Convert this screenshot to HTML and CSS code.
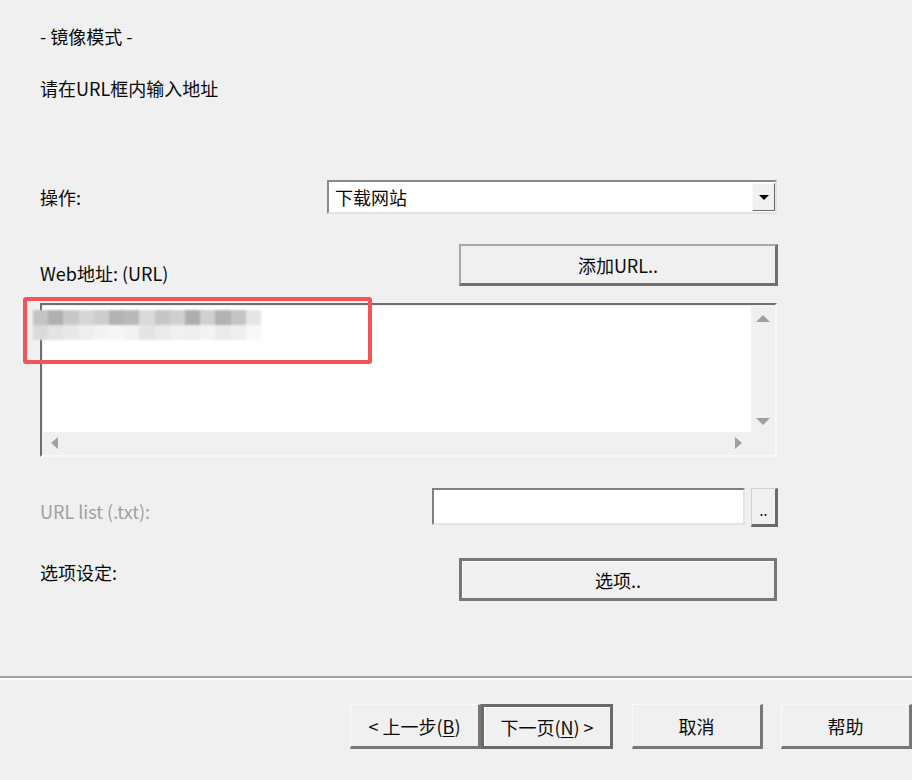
FILE: index.html
```html
<!DOCTYPE html>
<html lang="zh-CN">
<head>
<meta charset="utf-8">
<title>镜像模式</title>
<link rel="stylesheet" href="styles.css">
</head>
<body>
<div class="dialog">
  <div class="content">
    <p class="title">- 镜像模式 -</p>
    <p class="hint">请在URL框内输入地址</p>

    <div class="row row-op">
      <span class="label">操作:</span>
      <div class="combo">
        <span class="combo-text">下载网站</span>
        <span class="combo-btn"><span class="tri-down-black"></span></span>
      </div>
    </div>

    <div class="row row-urlhead">
      <span class="label label-low">Web地址: (URL)</span>
      <button class="btn btn-add">添加URL..</button>
    </div>

    <div class="urlbox">
      <div class="url-area"></div>
      <div class="vscroll">
        <span class="tri tri-up"></span>
        <span class="tri tri-down"></span>
      </div>
      <div class="hscroll">
        <span class="tri tri-left"></span>
        <span class="tri tri-right"></span>
      </div>
      <div class="corner"></div>

      <div class="mosaic">
        <div class="mrow mrow-top">
          <i style="background:#c4c4c4"></i><i style="background:#b0b0b0"></i><i style="background:#c8c8c8"></i><i style="background:#d6d6d6"></i><i style="background:#cdcdcd"></i><i style="background:#b3b3b3"></i><i style="background:#b9b9b9"></i><i style="background:#dadada"></i><i style="background:#c6c6c6"></i><i style="background:#cfcfcf"></i><i style="background:#adadad"></i><i style="background:#d0d0d0"></i><i style="background:#b2b2b2"></i><i style="background:#c4c4c4"></i><i style="background:#e6e6e6"></i>
        </div>
        <div class="mrow mrow-bot">
          <i style="background:#dadada"></i><i style="background:#e3e3e3"></i><i style="background:#e8e8e8"></i><i style="background:#eeeeee"></i><i style="background:#f3f3f3"></i><i style="background:#f6f6f6"></i><i style="background:#f2f2f2"></i><i style="background:#e4e4e4"></i><i style="background:#eaeaea"></i><i style="background:#f0f0f0"></i><i style="background:#efefef"></i><i style="background:#f3f3f3"></i><i style="background:#ebebeb"></i><i style="background:#efefef"></i><i style="background:#f8f8f8"></i>
        </div>
      </div>
      <div class="highlight"></div>
    </div>

    <div class="row row-list">
      <span class="label label-disabled">URL list (.txt):</span>
      <div class="list-ctrls">
        <div class="field"></div>
        <button class="btn btn-dots">..</button>
      </div>
    </div>

    <div class="row row-opts">
      <span class="label label-top">选项设定:</span>
      <button class="btn btn-opts">选项..</button>
    </div>
  </div>

  <div class="separator"></div>

  <div class="footer">
    <button class="btn fbtn btn-back">&lt; 上一步(<u>B</u>)</button>
    <button class="btn fbtn btn-next">下一页(<u>N</u>) &gt;</button>
    <button class="btn fbtn btn-cancel">取消</button>
    <button class="btn fbtn btn-help">帮助</button>
  </div>
</div>
</body>
</html>
```

FILE: styles.css
```css
html, body {
  margin: 0;
  padding: 0;
  background: #f0f0f0;
  overflow: hidden;
}

body {
  width: 912px;
  height: 780px;
  font-family: "Noto Sans CJK SC", "Noto Sans", sans-serif;
  font-size: 18px;
  color: #0a0a0a;
}

.dialog {
  width: 912px;
  height: 780px;
  overflow: hidden;
}

.content {
  width: 737px;
  padding: 25px 0 0 40px;
}

p {
  margin: 0;
  line-height: 22px;
}

.hint {
  margin-top: 30px;
}

.row {
  display: flex;
  justify-content: space-between;
}

.label {
  line-height: 22px;
  white-space: nowrap;
}

/* operation row */
.row-op {
  margin-top: 81px;
  height: 34px;
  align-items: center;
}

.combo {
  width: 446px;
  height: 30px;
  background: #fff;
  border: 2px solid;
  border-color: #8a8a8a #e3e3e3 #e3e3e3 #8a8a8a;
  display: flex;
  align-items: center;
  justify-content: space-between;
}

.combo-text {
  padding-left: 6px;
  line-height: 22px;
}

.combo-btn {
  width: 21px;
  height: 26px;
  background: #f0f0f0;
  border: 1px solid;
  border-color: #fafafa #6a6a6a #6a6a6a #fafafa;
  display: flex;
  align-items: center;
  justify-content: center;
}

.tri-down-black {
  width: 0;
  height: 0;
  border-left: 5px solid transparent;
  border-right: 5px solid transparent;
  border-top: 5px solid #000;
}

/* buttons */
.btn {
  font-family: inherit;
  font-size: 18px;
  color: #0a0a0a;
  background: #f0f0f0;
  border-style: solid;
  border-width: 2px 3px 3px 2px;
  border-color: #a8a8a8 #707070 #707070 #a8a8a8;
  padding: 0;
  margin: 0;
  box-sizing: border-box;
  line-height: 22px;
  cursor: default;
}

.row-urlhead {
  margin-top: 30px;
  height: 42px;
  align-items: flex-end;
}

.label-low {
  padding-bottom: 2px;
}

.btn-add {
  width: 319px;
  height: 42px;
  margin-right: -1px;
}

/* URL box */
.urlbox {
  position: relative;
  margin-top: 17px;
  width: 737px;
  height: 154px;
  box-sizing: border-box;
  border-style: solid;
  border-width: 2px;
  border-color: #6e6e6e #f8f8f8 #f8f8f8 #6e6e6e;
  display: grid;
  grid-template-columns: 1fr 24px;
  grid-template-rows: 1fr 23px;
  background: #f0f0f0;
}

.url-area {
  background: #fff;
  margin-top: 1px;
  margin-left: 1px;
}

.vscroll,
.hscroll {
  background: #f0f0f0;
  position: relative;
}

.corner {
  background: #f0f0f0;
}

.tri {
  position: absolute;
  width: 0;
  height: 0;
}

.tri-up {
  left: 5px;
  top: 10px;
  border-left: 7px solid transparent;
  border-right: 7px solid transparent;
  border-bottom: 7px solid #a0a0a0;
}

.tri-down {
  left: 5px;
  bottom: 7px;
  border-left: 7px solid transparent;
  border-right: 7px solid transparent;
  border-top: 7px solid #a0a0a0;
}

.tri-left {
  left: 9px;
  top: 5px;
  border-top: 6px solid transparent;
  border-bottom: 6px solid transparent;
  border-right: 7px solid #a0a0a0;
}

.tri-right {
  right: 9px;
  top: 5px;
  border-top: 6px solid transparent;
  border-bottom: 6px solid transparent;
  border-left: 7px solid #a0a0a0;
}

/* blurred mosaic of the hidden address */
.mosaic {
  position: absolute;
  left: -9px;
  top: 5px;
  width: 228px;
  height: 32px;
  filter: blur(1.2px);
}

.mrow {
  display: flex;
  height: 15px;
}

.mrow i {
  flex: 1;
}

.highlight {
  position: absolute;
  left: -19px;
  top: -8px;
  width: 349px;
  height: 67px;
  box-sizing: border-box;
  border: 4px solid #f05656;
  border-radius: 3px;
}

/* URL list row */
.row-list {
  margin-top: 31px;
  height: 39px;
  align-items: center;
}

.label-disabled {
  color: #a0a0a0;
  padding-top: 6px;
}

.list-ctrls {
  display: flex;
  gap: 6px;
  align-items: flex-start;
  margin-right: -1px;
}

.field {
  width: 313px;
  height: 37px;
  box-sizing: border-box;
  background: #fff;
  border-style: solid;
  border-width: 2px;
  border-color: #808080 #e3e3e3 #e3e3e3 #808080;
}

.btn-dots {
  width: 27px;
  height: 39px;
  border-width: 1px 3px 3px 1px;
  border-color: #d0d0d0 #6a6a6a #6a6a6a #d0d0d0;
  font-size: 14px;
  line-height: 30px;
  padding-top: 6px;
}

/* options row */
.row-opts {
  margin-top: 31px;
  height: 43px;
  align-items: flex-start;
}

.label-top {
  margin-top: 3px;
}

.btn-opts {
  width: 318px;
  height: 43px;
  border-width: 3px;
  border-color: #777;
  box-shadow: inset 1px 1px 0 #fff;
}

/* separator */
.separator {
  margin-top: 75px;
  height: 0;
  border-top: 2px solid #a0a0a0;
  border-bottom: 2px solid #fcfcfc;
}

/* footer */
.footer {
  display: flex;
  margin-top: 24px;
  padding-left: 350px;
  white-space: nowrap;
}

.fbtn {
  height: 45px;
  width: 131px;
  flex: none;
  border-width: 1px 3px 3px 1px;
  border-color: #fafafa #777 #777 #fafafa;
}

.fbtn u {
  text-underline-offset: 2px;
}

.btn-next {
  width: 132px;
  border-width: 3px;
  border-color: #6a6a6a;
  box-shadow: inset 1px 1px 0 #fff;
}

.btn-cancel {
  margin-left: 19px;
}

.btn-help {
  margin-left: 18px;
}
```
